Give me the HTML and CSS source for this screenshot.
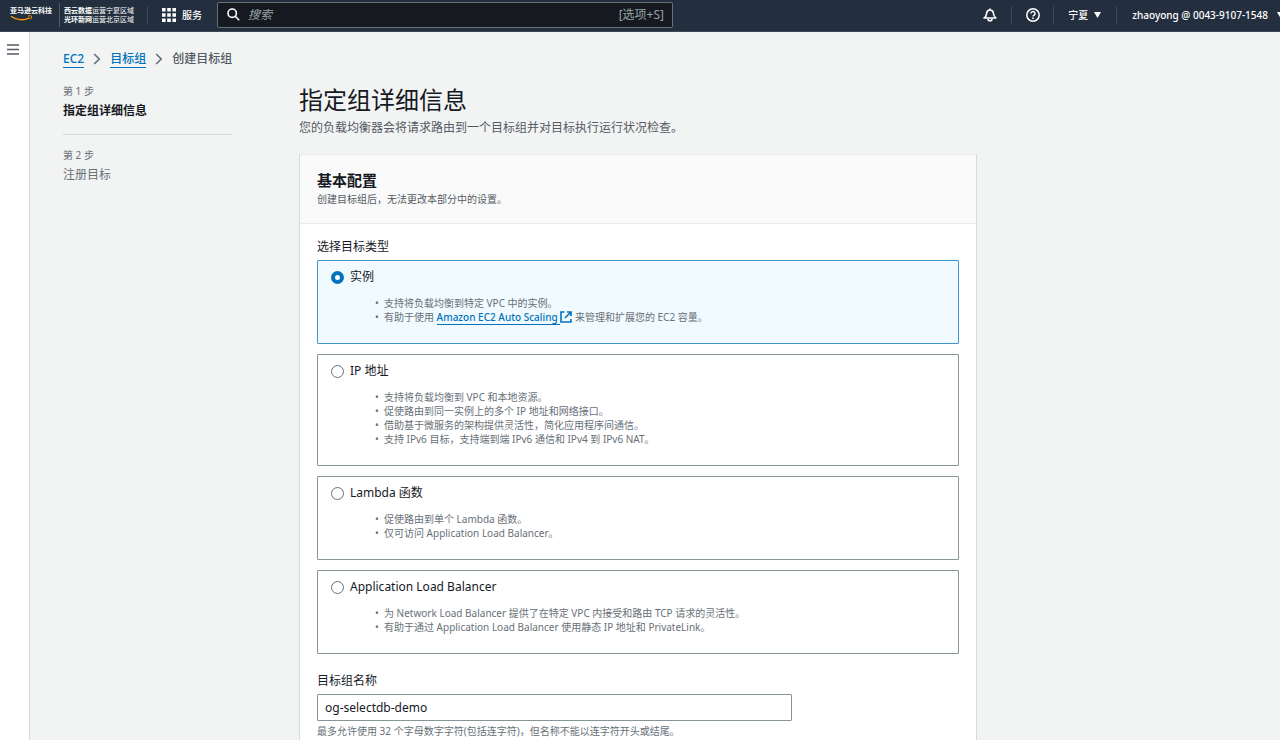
FILE: index.html
```html
<!DOCTYPE html>
<html lang="zh-CN">
<head>
<meta charset="utf-8">
<title>创建目标组</title>
<link rel="stylesheet" href="styles.css">
</head>
<body class="app">
<header class="topbar">
  <a class="brand" href="#" aria-label="亚马逊云科技">
    <span class="brand-name">亚马逊云科技</span>
    <svg class="brand-smile" width="24" height="7" viewBox="0 0 24 7" fill="none" stroke="#f90"><path d="M1 1.300C6 5.300 14 5.800 19.500 2.800" stroke-width="1.400"/><path d="M18 1.200C19.500 .6 21.600 .6 21.600 1.300S21.200 3.300 20.600 4.300" stroke-width="1"/></svg>
  </a>
  <div class="operators"><b>西云数据</b>运营宁夏区域<br><b>光环新网</b>运营北京区域</div>
  <button class="services" type="button">
    <svg width="14" height="14" viewBox="0 0 14 14" fill="#fff"><path d="M0 0h3.600v3.600H0zM5.200 0h3.600v3.600H5.200zM10.400 0H14v3.600h-3.600zM0 5.200h3.600v3.600H0zM5.200 5.200h3.600v3.600H5.200zM10.400 5.200H14v3.600h-3.600zM0 10.400h3.600V14H0zM5.200 10.400h3.600V14H5.200zM10.400 10.400H14V14h-3.600z"/></svg>
    服务
  </button>
  <label class="search">
    <svg width="13" height="13" viewBox="0 0 13 13" fill="none" stroke="#fff" stroke-width="1.600"><circle cx="5.200" cy="5.200" r="4.200"/><path d="M8.200 8.200l4 4"/></svg>
    <input type="search" placeholder="搜索" aria-label="搜索">
    <span class="shortcut">[选项+S]</span>
  </label>
  <div class="tools">
    <button class="tool tool-icon" type="button" aria-label="通知">
      <svg width="14" height="14" viewBox="0 0 14 14" fill="none" stroke="#fff" stroke-width="1.600" stroke-linejoin="round"><path d="M7 .4v1.500M1.100 10h11.800C11.200 9 10.600 7.800 10.400 5.300 10.200 3.200 8.900 2 7 2S3.800 3.200 3.600 5.300C3.400 7.800 2.800 9 1.100 10z"/><path d="M5 10.400a2 2.400 0 0 0 4 0"/></svg>
    </button>
    <button class="tool tool-icon" type="button" aria-label="帮助">
      <svg width="14" height="14" viewBox="0 0 14 14" fill="none" stroke="#fff" stroke-width="1.500"><circle cx="7" cy="7" r="6.200"/><path d="M5 5.600a2 2 0 1 1 2.900 1.700C7.300 7.600 7 7.900 7 8.600M7 9.600v1.400"/></svg>
    </button>
    <button class="tool tool-region" type="button">宁夏
      <svg width="7" height="6" viewBox="0 0 7 6" fill="#fff"><path d="M0 0h7L3.500 6z"/></svg>
    </button>
    <button class="tool tool-account" type="button">zhaoyong @ 0043-9107-1548
      <svg width="7" height="6" viewBox="0 0 7 6" fill="#fff"><path d="M0 0h7L3.500 6z"/></svg>
    </button>
  </div>
</header>

<div class="shell">
  <aside class="rail">
    <button class="menu" type="button" aria-label="打开导航">
      <svg width="12" height="11" viewBox="0 0 12 11" stroke="#545b64" stroke-width="1.400"><path d="M0 1h12M0 5.500h12M0 10h12"/></svg>
    </button>
  </aside>
  <main class="page">
    <nav class="crumbs" aria-label="路径">
      <a href="#">EC2</a>
      <svg width="8" height="12" viewBox="0 0 8 12" fill="none" stroke="#687078" stroke-width="1.700"><path d="M1.200 1l5 5-5 5"/></svg>
      <a href="#">目标组</a>
      <svg width="8" height="12" viewBox="0 0 8 12" fill="none" stroke="#687078" stroke-width="1.700"><path d="M1.200 1l5 5-5 5"/></svg>
      <span>创建目标组</span>
    </nav>
    <div class="columns">
      <ol class="steps">
        <li class="step step-current"><span class="step-no">第 1 步</span><span class="step-name">指定组详细信息</span></li>
        <li class="step"><span class="step-no">第 2 步</span><span class="step-name">注册目标</span></li>
      </ol>
      <form class="content">
        <h1 class="title">指定组详细信息</h1>
        <p class="intro">您的负载均衡器会将请求路由到一个目标组并对目标执行运行状况检查。</p>
        <section class="card">
          <div class="card-head">
            <h2>基本配置</h2>
            <p>创建目标组后，无法更改本部分中的设置。</p>
          </div>
          <div class="card-body">
            <div class="label" id="type-label">选择目标类型</div>
            <div class="tiles" role="radiogroup" aria-labelledby="type-label">
              <div class="tile tile-selected">
                <label class="choice"><input type="radio" name="type" checked>实例</label>
                <ul>
                  <li>支持将负载均衡到特定 VPC 中的实例。</li>
                  <li>有助于使用 <a class="external" href="#"><span>Amazon EC2 Auto Scaling&nbsp;</span><svg width="12" height="12" viewBox="0 0 12 12" fill="none" stroke="#0073bb" stroke-width="1.600"><path d="M4.500 1H1v10h10V8M7 1h4v4M11 1L5 7"/></svg></a> 来管理和扩展您的 EC2 容量。</li>
                </ul>
              </div>
              <div class="tile">
                <label class="choice"><input type="radio" name="type">IP 地址</label>
                <ul>
                  <li>支持将负载均衡到 VPC 和本地资源。</li>
                  <li>促使路由到同一实例上的多个 IP 地址和网络接口。</li>
                  <li>借助基于微服务的架构提供灵活性，简化应用程序间通信。</li>
                  <li>支持 IPv6 目标，支持端到端 IPv6 通信和 IPv4 到 IPv6 NAT。</li>
                </ul>
              </div>
              <div class="tile">
                <label class="choice"><input type="radio" name="type">Lambda 函数</label>
                <ul>
                  <li>促使路由到单个 Lambda 函数。</li>
                  <li>仅可访问 Application Load Balancer。</li>
                </ul>
              </div>
              <div class="tile">
                <label class="choice"><input type="radio" name="type">Application Load Balancer</label>
                <ul>
                  <li>为 Network Load Balancer 提供了在特定 VPC 内接受和路由 TCP 请求的灵活性。</li>
                  <li>有助于通过 Application Load Balancer 使用静态 IP 地址和 PrivateLink。</li>
                </ul>
              </div>
            </div>
            <label class="label" for="group-name">目标组名称</label>
            <input class="field" id="group-name" type="text" value="og-selectdb-demo" aria-describedby="name-hint">
            <p class="hint" id="name-hint">最多允许使用 32 个字母数字字符(包括连字符)，但名称不能以连字符开头或结尾。</p>
          </div>
        </section>
      </form>
    </div>
  </main>
</div>
</body>
</html>
```
FILE: styles.css
```css
* { box-sizing: border-box; }
h1, h2, p, ul, ol { margin: 0; padding: 0; }
svg { display: block; flex: none; }
button, input { font: inherit; color: inherit; }
button { border: 0; background: none; padding: 0; cursor: pointer; }
a { color: #0073bb; text-decoration: none; }

.app {
  margin: 0;
  height: 100vh;
  display: flex;
  flex-direction: column;
  overflow: hidden;
  background: #f2f3f3;
  color: #16191f;
  font: 12px/18px "Noto Sans", "Noto Sans CJK SC", sans-serif;
}

/* Top bar */
.topbar {
  flex: none;
  display: flex;
  align-items: center;
  height: 32px;
  padding: 0 0 2px 10px;
  overflow: hidden;
  white-space: nowrap;
  background: #232f3e;
  border-bottom: 1px solid #3d4855;
  color: #fff;
}
.brand { display: flex; flex-direction: column; padding-right: 7px; color: #fff; }
.brand-name { font-size: 7px; font-weight: 700; line-height: 8px; }
.operators {
  padding: 3px 13px 3px 4px;
  border-left: 1px solid #545b64;
  font-size: 7px;
  line-height: 9px;
}
.services {
  display: flex;
  align-items: center;
  gap: 6px;
  height: 18px;
  padding: 0 15px 0 14px;
  border-left: 1px solid #3d4855;
  font-size: 10px;
  font-weight: 500;
}
.search {
  flex: 0 1 456px;
  display: flex;
  align-items: center;
  gap: 8px;
  height: 26px;
  padding: 0 8px 0 9px;
  background: #16191f;
  border: 1px solid #687078;
  border-radius: 2px;
  color: #95a5a6;
}
.search input {
  flex: 1;
  min-width: 0;
  padding: 0;
  border: 0;
  outline: 0;
  background: none;
}
.search input::placeholder { color: #95a5a6; font-style: italic; }
.tools { display: flex; align-items: center; margin: 0 -4px 0 auto; }
.tool {
  display: flex;
  align-items: center;
  justify-content: center;
  height: 18px;
  font-size: 10px;
  font-weight: 500;
}
.tool + .tool { border-left: 1px solid #3d4855; }
.tool-icon { width: 42px; }
.tool-region { gap: 6px; padding: 0 15px 0 14px; }
.tool-account { gap: 9px; padding-left: 15px; }

/* Page frame */
.shell { flex: 1; min-height: 0; display: flex; }
.rail {
  flex: none;
  width: 30px;
  padding: 12px 0 0 7px;
  background: #fff;
  border-right: 1px solid #d5dbdb;
}
.menu { display: block; }
.page {
  flex: 1;
  padding: 18px 33px 0;
  overflow: auto;
  scrollbar-width: none;
}
.crumbs { display: flex; align-items: center; gap: 9px; color: #545b64; font-weight: 500; }
.crumbs a { line-height: 16px; border-bottom: 1px solid #0073bb; }
.columns {
  display: grid;
  grid-template-columns: 169px minmax(0, 1fr);
  gap: 67px;
  max-width: 914px;
  margin-top: 15px;
}

/* Wizard steps */
.steps { list-style: none; }
.step { display: flex; flex-direction: column; padding-bottom: 13px; color: #687078; }
.step + .step { padding-top: 12px; border-top: 1px solid #d5dbdb; }
.step-no { font-size: 10px; line-height: 17px; }
.step-name { line-height: 21px; }
.step-current .step-name { color: #16191f; font-weight: 700; }

/* Content */
.title { font-size: 24px; font-weight: 400; line-height: 34px; }
.intro { margin: 1px 0 16px; line-height: 20px; color: #545b64; }
.card { background: #fff; border: 1px solid #d5dbdb; border-top-color: #eaeded; }
.card-head { padding: 15px 17px; background: #fafafa; border-bottom: 1px solid #eaeded; }
.card-head h2 { font-size: 15px; line-height: 20px; }
.card-head p { font-size: 10px; line-height: 18px; color: #545b64; }
.card-body { padding: 14px 17px 24px; }
.label { display: block; line-height: 18px; }
.tiles { display: flex; flex-direction: column; gap: 10px; margin: 4px 0 18px; }
.tile { padding: 7px 13px 19px; border: 1px solid #879596; border-radius: 1px; }
.tile-selected { background: #f1faff; border-color: #3f95cc; }
.choice { display: flex; align-items: center; gap: 6px; }
.choice input {
  appearance: none;
  width: 13px;
  height: 13px;
  margin: 0;
  border: 1px solid #687078;
  border-radius: 50%;
  background: #fff;
}
.choice input:checked { border: 4px solid #0073bb; }
.tile ul {
  margin-top: 10px;
  padding-left: 53px;
  list-style-type: "•  ";
  color: #687078;
  font-size: 10px;
  line-height: 14px;
}
.external { font-weight: 500; }
.external span { border-bottom: 1px solid #0073bb; }
.external svg { display: inline-block; vertical-align: -2px; }
.field {
  display: block;
  width: 74%;
  height: 27px;
  margin: 4px 0 0;
  padding: 0 7px;
  background: #fff;
  border: 1px solid #879596;
  border-radius: 1px;
}
.hint { margin-top: 1px; color: #687078; font-size: 10px; }
```
